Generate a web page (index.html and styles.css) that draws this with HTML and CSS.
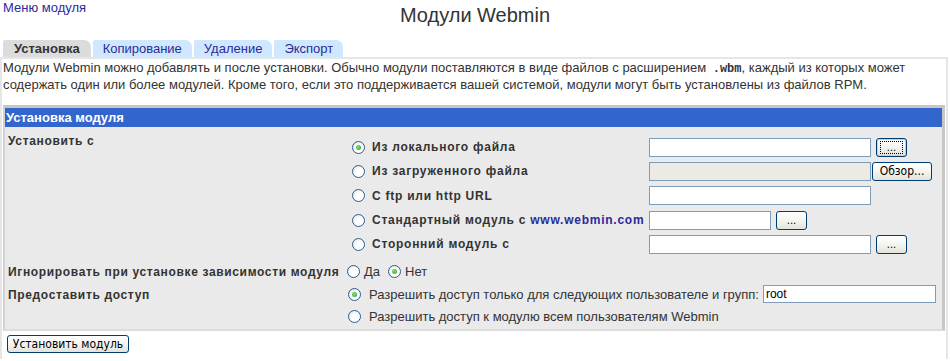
FILE: index.html
```html
<!DOCTYPE html>
<html lang="ru">
<head>
<meta charset="utf-8">
<title>Модули Webmin</title>
<link rel="stylesheet" href="styles.css">
</head>
<body>
<div class="top">
  <a class="menu" href="#">Меню модуля</a>
  <h1 class="title">Модули Webmin</h1>
  <span></span>
</div>
<div class="tabs">
  <span class="tab active">Установка</span>
  <span class="tab">Копирование</span>
  <span class="tab">Удаление</span>
  <span class="tab">Экспорт</span>
</div>
<div class="panel">
  <p class="desc">Модули Webmin можно добавлять и после установки. Обычно модули поставляются в виде файлов с расширением <code>.wbm</code>, каждый из которых может содержать один или более модулей. Кроме того, если это поддерживается вашей системой, модули могут быть установлены из файлов RPM.</p>
  <div class="box">
    <div class="box-head">Установка модуля</div>
    <div class="box-body">
      <div class="label">Установить с</div>
      <div class="sources">
        <div class="opt"><span class="radio checked"></span><b>Из локального файла</b></div>
        <div class="field"><span class="input w222"></span><span class="btn dots focus"><span class="focusring">...</span></span></div>
        <div class="opt"><span class="radio"></span><b>Из загруженного файла</b></div>
        <div class="field"><span class="input w222 disabled"></span><span class="btn browse">Обзор...</span></div>
        <div class="opt"><span class="radio"></span><b>С ftp или http URL</b></div>
        <div class="field"><span class="input w222"></span></div>
        <div class="opt"><span class="radio"></span><b>Стандартный модуль с <a href="#">www.webmin.com</a></b></div>
        <div class="field"><span class="input w122"></span><span class="btn dots">...</span></div>
        <div class="opt"><span class="radio"></span><b>Сторонний модуль с</b></div>
        <div class="field"><span class="input w222"></span><span class="btn dots">...</span></div>
      </div>
      <div class="label mid">Игнорировать при установке зависимости модуля</div>
      <div class="inline"><span class="radio"></span><span class="lbl">Да</span><span class="radio checked"></span><span class="lbl">Нет</span></div>
      <div class="label acc">Предоставить доступ</div>
      <div class="access">
        <div class="opt2"><span class="radio checked"></span><span class="lbl">Разрешить доступ только для следующих пользователе и групп:</span><span class="input root">root</span></div>
        <div class="opt2"><span class="radio"></span><span class="lbl">Разрешить доступ к модулю всем пользователям Webmin</span></div>
      </div>
    </div>
  </div>
  <div class="actions"><span class="btn submit">Установить модуль</span></div>
</div>
</body>
</html>
```

FILE: styles.css
```css
html, body {
  margin: 0;
  padding: 0;
  background: #fff;
}
body {
  width: 950px;
  height: 361px;
  overflow: hidden;
  font-family: "Liberation Sans", Arial, sans-serif;
  font-size: 13px;
  color: #333;
}
a {
  color: #2b2b9b;
  text-decoration: none;
}
.top {
  display: grid;
  grid-template-columns: 1fr auto 1fr;
  align-items: start;
  height: 40px;
}
.menu {
  padding: 0 0 0 3px;
  font-size: 13px;
  line-height: 15px;
}
.title {
  margin: 3px 0 0;
  font-size: 20px;
  font-weight: normal;
  line-height: 24px;
  color: #333;
}
.tabs {
  display: flex;
  gap: 2px;
  padding-left: 3px;
  height: 17px;
}
.tab {
  display: block;
  padding: 0 10px;
  height: 17px;
  line-height: 18px;
  background: #cfe8ff;
  color: #2b2b9b;
  font-size: 13px;
  border-top-right-radius: 7px;
  border-top-left-radius: 2px;
}
.tab.active {
  background: #dcdcdc;
  color: #333;
  font-weight: bold;
  padding: 0 11px;
}
.panel {
  border-top: 2px solid #e6e6e6;
  border-left: 2px solid #e6e6e6;
  border-right: 2px solid #e6e6e6;
  width: 948px;
  height: 302px;
  box-sizing: border-box;
  padding: 0 1px;
}
.desc {
  margin: 0;
  padding: 0;
  line-height: 17px;
  height: 46px;
}
.desc code {
  font-family: "Liberation Mono", monospace;
  font-size: 12px;
  font-weight: bold;
  line-height: 1;
  padding-left: 3px;
}
.box {
  border: 3px solid #c6c6c6;
  border-left-width: 2px;
  border-bottom-width: 2px;
  border-bottom-color: #dcdcdc;
  border-left-color: #d2d2d2;
  background: #eaeaea;
}
.box-head {
  background: #3366cc;
  color: #fff;
  font-weight: bold;
  font-size: 13px;
  line-height: 19px;
  padding-left: 1px;
}
.box-body {
  display: grid;
  grid-template-columns: 341px 1fr;
  padding: 5px 0 2px 0;
  font-size: 12px;
}
.label {
  font-weight: bold;
  padding: 2px 0 0 3px;
  letter-spacing: 0.65px;
}
.label.mid {
  padding-top: 9px;
}
.label.acc {
  padding-top: 9px;
}
.sources {
  display: grid;
  grid-template-columns: 303px auto;
  grid-auto-rows: 24.3px;
  align-items: center;
  padding-top: 3px;
}
.opt {
  display: flex;
  align-items: center;
  letter-spacing: 0.75px;
}
.opt b {
  margin-left: 7px;
}
.field {
  display: flex;
  align-items: center;
  gap: 5px;
}
.radio {
  position: relative;
  display: inline-block;
  width: 11px;
  height: 11px;
  border: 1px solid #2c5d8f;
  border-radius: 50%;
  background: radial-gradient(circle at 65% 65%, #fff 0, #fff 40%, #dcdcd4 100%);
  margin-left: 6px;
  flex: none;
}
.radio.checked::after {
  content: "";
  position: absolute;
  left: 3px;
  top: 3px;
  width: 5px;
  height: 5px;
  border-radius: 50%;
  background: radial-gradient(circle at 40% 40%, #7ee27e, #21a121);
}
.input {
  display: inline-block;
  box-sizing: border-box;
  height: 19px;
  border: 1px solid #7f9db9;
  background: #fff;
  font-size: 12px;
  line-height: 17px;
  padding-left: 2px;
  color: #000;
  letter-spacing: 0;
}
.input.w222 { width: 222px; }
.input.w122 { width: 122px; }
.input.disabled { background: #ebebe4; }
.btn {
  display: inline-flex;
  align-items: center;
  justify-content: center;
  box-sizing: border-box;
  height: 19px;
  border: 1px solid #003c74;
  border-radius: 3px;
  background: linear-gradient(#ffffff, #f4f4f0 50%, #e3e3db);
  font-size: 11px;
  color: #000;
  font-family: "DejaVu Sans Condensed", "Liberation Sans", sans-serif;
}
.btn.dots {
  width: 31px;
}
.btn.focus {
  box-shadow: inset 0 0 0 1px #b8d2f5;
}
.focusring {
  display: block;
  width: 23px;
  height: 13px;
  line-height: 11px;
  text-align: center;
  border: 1px dotted #000;
  box-sizing: border-box;
}
.btn.browse {
  width: 60px;
  margin-left: -4px;
  font-size: 12px;
}
.inline {
  display: flex;
  align-items: center;
  padding-top: 8px;
  font-size: 13px;
}
.inline .radio { margin-left: 8px; }
.inline .radio:first-child { margin-left: 1px; }
.lbl {
  margin-left: 4px;
}
.access {
  padding-top: 4px;
  font-size: 13px;
}
.opt2 {
  display: flex;
  align-items: center;
  height: 22px;
}
.opt2 .radio { margin-left: 2px; }
.opt2 .lbl { margin-left: 8px; }
.input.root {
  width: 173px;
  height: 18px;
  margin-left: 4px;
}
.actions {
  padding: 4px 0 0 4px;
}
.btn.submit {
  width: 122px;
  height: 18px;
  font-size: 12px;
}
```
